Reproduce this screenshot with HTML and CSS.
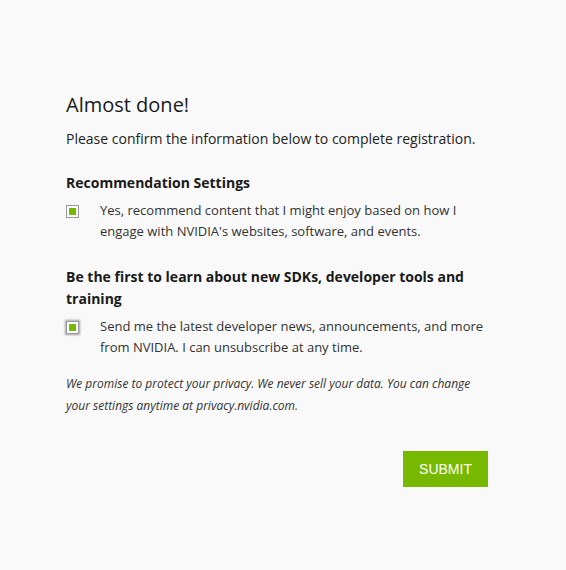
FILE: index.html
```html
<!DOCTYPE html>
<html>
<head>
<meta charset="utf-8">
<link rel="stylesheet" href="styles.css">
</head>
<body>
<main class="form">
  <h1 class="title">Almost done!</h1>
  <p class="intro">Please confirm the information below to complete registration.</p>

  <h2 class="section">Recommendation Settings</h2>
  <label class="check">
    <span class="box"><span class="tick"></span></span>
    <span class="check-text">Yes, recommend content that I might enjoy based on how I engage with NVIDIA's websites, software, and events.</span>
  </label>

  <h2 class="section section-2">Be the first to learn about new SDKs, developer tools and training</h2>
  <label class="check">
    <span class="box box-focus"><span class="tick"></span></span>
    <span class="check-text">Send me the latest developer news, announcements, and more from NVIDIA. I can unsubscribe at any time.</span>
  </label>

  <p class="privacy">We promise to protect your privacy. We never sell your data. You can change your settings anytime at privacy.nvidia.com.</p>

  <div class="actions">
    <button class="submit" type="button">SUBMIT</button>
  </div>
</main>
</body>
</html>
```

FILE: styles.css
```css
html, body {
  margin: 0;
  padding: 0;
  background: #f9f9f9;
}
body {
  font-family: "Open Sans", "Noto Sans", sans-serif;
  color: #1a1a1a;
}
.form {
  width: 422px;
  margin-left: 66px;
  padding-top: 91px;
}
.title {
  font-size: 20px;
  font-weight: 400;
  line-height: 28px;
  margin: 0;
  color: #1a1a1a;
}
.intro {
  font-size: 14px;
  line-height: 22px;
  margin: 9px 0 0;
  color: #222;
}
.section {
  font-size: 14px;
  font-weight: 700;
  line-height: 22px;
  margin: 22px 0 0;
  color: #1a1a1a;
}
.section-2 {
  margin-top: 24px;
}
.check {
  display: flex;
  align-items: flex-start;
  margin-top: 6px;
}
.box {
  flex: none;
  width: 11px;
  height: 11px;
  border: 1px solid #999;
  background: #fff;
  margin: 5px 21px 0 0;
  display: flex;
  align-items: center;
  justify-content: center;
}
.box-focus {
  box-shadow: 0 0 2px 1px rgba(0,0,0,0.35);
}
.tick {
  width: 7px;
  height: 7px;
  background: #76b900;
}
.check-text {
  font-size: 13px;
  line-height: 21px;
  color: #333;
}
.privacy {
  font-size: 12px;
  font-style: italic;
  line-height: 22px;
  margin: 15px 0 0;
  color: #333;
}
.actions {
  display: flex;
  justify-content: flex-end;
  margin-top: 34px;
}
.submit {
  width: 85px;
  height: 36px;
  border: none;
  background: #76b900;
  color: #fff;
  font-family: "Liberation Sans", Arial, sans-serif;
  font-size: 14px;
  padding: 0;
  cursor: pointer;
}
```
